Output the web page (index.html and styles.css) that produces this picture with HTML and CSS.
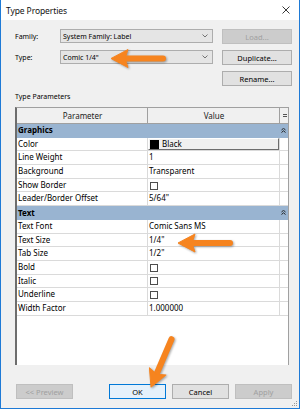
FILE: index.html
```html
<!DOCTYPE html>
<html>
<head lang="en">
    <meta charset="UTF-8">
    <title>Type Properties</title>
    <link rel="stylesheet" href="styles.css">
</head>
<body>
<div class="win">
    <div class="titlebar">
        <span class="title">Type Properties</span>
        <svg class="close" width="8" height="8" viewBox="0 0 8 8"><path d="M0.5 0.5L7.5 7.5M7.5 0.5L0.5 7.5" stroke="#222" stroke-width="0.9"/></svg>
    </div>
    <div class="content">
        <div class="top">
            <span class="lbl">Family:</span>
            <div class="combo">System Family: Label<svg class="chev" width="6" height="4" viewBox="0 0 6 4"><path d="M0.5 0.5L3 3L5.5 0.5" fill="none" stroke="#555" stroke-width="0.8"/></svg></div>
            <span class="btn disabled">Load...</span>

            <span class="lbl">Type:</span>
            <div class="combo">Comic 1/4"<svg class="chev" width="6" height="4" viewBox="0 0 6 4"><path d="M0.5 0.5L3 3L5.5 0.5" fill="none" stroke="#555" stroke-width="0.8"/></svg></div>
            <span class="btn">Duplicate...</span>

            <span></span>
            <span></span>
            <span class="btn">Rename...</span>
        </div>

        <div class="caption">Type Parameters</div>

        <div class="grid">
            <div class="row head">
                <div class="cell">Parameter</div>
                <div class="cell">Value</div>
                <div class="cell side"><span class="eq"></span></div>
            </div>
            <div class="row group">
                <div class="cell">Graphics</div>
                <svg class="fold" width="5" height="5" viewBox="0 0 5 5"><path d="M0.5 2L2.5 0.3L4.5 2M0.5 4.5L2.5 2.8L4.5 4.5" fill="none" stroke="#222" stroke-width="1"/></svg>
            </div>
            <div class="row">
                <div class="cell">Color</div>
                <div class="cell"><span class="colorbox"><span class="swatch"></span>Black</span></div>
                <div class="cell side"></div>
            </div>
            <div class="row">
                <div class="cell">Line Weight</div>
                <div class="cell">1</div>
                <div class="cell side"></div>
            </div>
            <div class="row">
                <div class="cell">Background</div>
                <div class="cell">Transparent</div>
                <div class="cell side"></div>
            </div>
            <div class="row">
                <div class="cell">Show Border</div>
                <div class="cell"><span class="check"></span></div>
                <div class="cell side"></div>
            </div>
            <div class="row">
                <div class="cell">Leader/Border Offset</div>
                <div class="cell">5/64"</div>
                <div class="cell side"></div>
            </div>
            <div class="row group">
                <div class="cell">Text</div>
                <svg class="fold" width="5" height="5" viewBox="0 0 5 5"><path d="M0.5 2L2.5 0.3L4.5 2M0.5 4.5L2.5 2.8L4.5 4.5" fill="none" stroke="#222" stroke-width="1"/></svg>
            </div>
            <div class="row">
                <div class="cell">Text Font</div>
                <div class="cell">Comic Sans MS</div>
                <div class="cell side"></div>
            </div>
            <div class="row">
                <div class="cell">Text Size</div>
                <div class="cell">1/4"</div>
                <div class="cell side"></div>
            </div>
            <div class="row">
                <div class="cell">Tab Size</div>
                <div class="cell">1/2"</div>
                <div class="cell side"></div>
            </div>
            <div class="row">
                <div class="cell">Bold</div>
                <div class="cell"><span class="check"></span></div>
                <div class="cell side"></div>
            </div>
            <div class="row">
                <div class="cell">Italic</div>
                <div class="cell"><span class="check"></span></div>
                <div class="cell side"></div>
            </div>
            <div class="row">
                <div class="cell">Underline</div>
                <div class="cell"><span class="check"></span></div>
                <div class="cell side"></div>
            </div>
            <div class="row">
                <div class="cell">Width Factor</div>
                <div class="cell">1.000000</div>
                <div class="cell side"></div>
            </div>
        </div>

        <div class="actions">
            <span class="btn disabled">&lt;&lt; Preview</span>
            <div class="right">
                <span class="btn default">OK</span>
                <span class="btn">Cancel</span>
                <span class="btn disabled">Apply</span>
            </div>
        </div>
    </div>

    <svg class="grip" width="6" height="6" viewBox="0 0 6 6">
        <rect x="4" y="0" width="1" height="1" fill="#999"/>
        <rect x="2" y="2" width="1" height="1" fill="#999"/>
        <rect x="4" y="2" width="1" height="1" fill="#999"/>
        <rect x="0" y="4" width="1" height="1" fill="#999"/>
        <rect x="2" y="4" width="1" height="1" fill="#999"/>
        <rect x="4" y="4" width="1" height="1" fill="#999"/>
    </svg>

    <!-- orange callout arrows drawn over the dialog -->
    <svg class="arrows" width="300" height="409" viewBox="0 0 300 409">
        <defs>
            <g id="arrow">
                <line x1="12" y1="0" x2="52" y2="0" stroke="#f6841f" stroke-width="6" stroke-linecap="round"/>
                <path d="M0 0L17 -9L14 0L17 9Z" fill="#f6841f" stroke="#f6841f" stroke-width="1" stroke-linejoin="round"/>
            </g>
        </defs>
        <use href="#arrow" transform="translate(110 58.5)"/>
        <use href="#arrow" transform="translate(177 243)"/>
        <use href="#arrow" transform="translate(150 387) rotate(-66.8)"/>
    </svg>
</div>
</body>
</html>
```

FILE: styles.css
```css
*{margin:0;padding:0;box-sizing:border-box}
body{background:#fff;font-family:"Noto Sans","Open Sans",sans-serif;color:#000}
.win{position:relative;width:300px;height:409px;background:#f0f0f0;border:1px solid #1e7ad6;border-top:none;overflow:hidden}
.titlebar{height:20px;background:#fff;display:flex;align-items:center;justify-content:space-between;padding:0 9px 0 5px}
.title{font-size:8.5px;letter-spacing:-0.1px;color:#111}
.content{padding:9px 7px 0 14px}

.top{display:grid;grid-template-columns:36px 153px 70px;column-gap:9px;row-gap:6px;grid-auto-rows:15px;font-size:7px}
.lbl{line-height:15px}
.combo{height:14px;background:#e5e5e5;border:1px solid #adadad;display:flex;align-items:center;justify-content:space-between;padding:0 4px 0 2px}
.btn{display:flex;align-items:center;justify-content:center;height:15px;background:#e1e1e1;border:1px solid #adadad;font-size:7.5px}
.btn.disabled{background:#cccccc;border-color:#bfbfbf;color:#a0a0a0}
.btn.default{background:#e5f1fb;border-color:#0078d7}

.caption{font-size:7px;margin-top:6px;height:10px;line-height:10px}
.grid{margin-top:5px;width:274px;height:258px;background:#fff;border-left:2px solid #6d6d6d;border-top:1px solid #a0a0a0;border-right:1px solid #a0a0a0;font-size:8px}
.row{display:grid;grid-template-columns:131px 132px 1fr;height:13.7px}
.cell{border-right:1px solid #dadada;border-bottom:1px solid #dadada;padding-left:1px;line-height:12.7px;white-space:nowrap;overflow:hidden}
.cell.side{border-right:none}
.row.head{height:16px;background:#f0f0f0}
.row.head .cell{text-align:center;line-height:15px;border-color:#a0a0a0;color:#222}
.row.head .side{display:flex;align-items:center;justify-content:center}
.eq{display:block;width:4px;height:3px;border-top:1px solid #555;border-bottom:1px solid #555}
.row.group{display:flex;justify-content:space-between;align-items:center;background:#99b4d1;padding-right:2px}
.row.group .cell{border:none;font-weight:bold}
.colorbox{display:flex;align-items:center;height:12.7px;width:131px;margin-left:-1px;border:1px solid #fff;border-right-color:#6d6d6d;border-bottom-color:#6d6d6d;background:#f0f0f0;gap:3px}
.swatch{width:9px;height:9px;background:#000;margin-left:1px}
.check{display:inline-block;width:8px;height:8px;border:1px solid #4d4d4d;background:#fff;vertical-align:middle;margin-left:1px}

.actions{margin-top:19px;display:flex;justify-content:space-between;width:277px;padding-left:1px}
.actions .btn{width:57px}
.actions .right{display:flex;gap:6px}

.grip{position:absolute;right:1px;bottom:1px}
.arrows{position:absolute;left:0;top:0;pointer-events:none;filter:drop-shadow(1px 1.5px 1px rgba(0,0,0,.35))}
```
